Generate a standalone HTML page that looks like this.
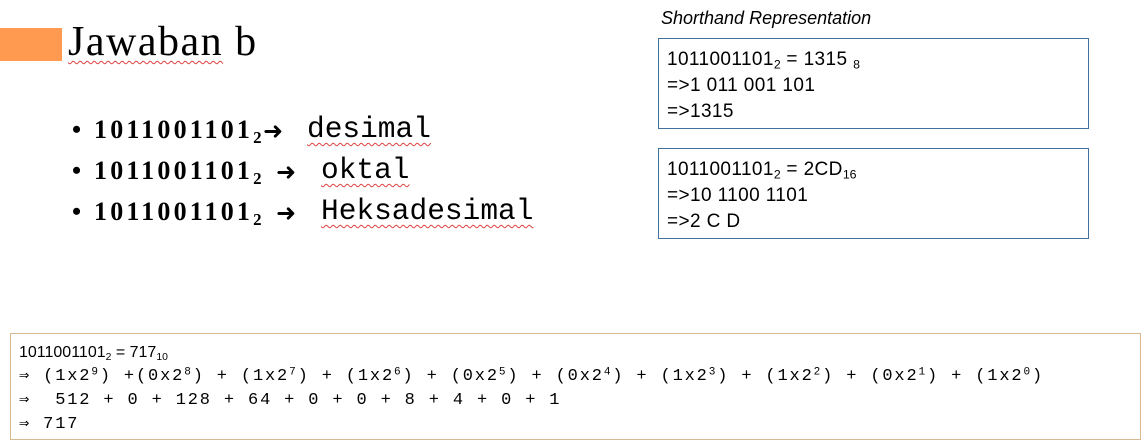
<!DOCTYPE html>
<html><head><meta charset="utf-8"><style>
body{margin:0;width:1146px;height:445px;background:#fff;position:relative;overflow:hidden;font-family:"Liberation Sans",sans-serif;color:#000}
.a{position:absolute;white-space:nowrap}
.sq{position:absolute;left:0;top:28px;width:62px;height:33px;background:#ff9a50}
.t{left:68px;top:18px;font-family:"Liberation Serif",serif;font-size:42px;letter-spacing:1.5px}
.w{text-decoration:underline wavy #e04040;text-decoration-thickness:1px;text-underline-offset:5px}
.b{font-family:"Liberation Serif",serif;font-size:26px;font-weight:bold;left:72px;letter-spacing:3.2px}
.b .m{font-family:"Liberation Mono",monospace;font-weight:normal;font-size:29.5px;letter-spacing:0;position:absolute}
.ar{font-family:"DejaVu Sans",sans-serif;font-weight:bold;font-size:24px;letter-spacing:0;position:absolute;top:2px}
sub{font-size:65%;vertical-align:-0.3em;line-height:0;letter-spacing:0}
sup{font-size:65%;vertical-align:0.5em;line-height:0}
.box{position:absolute;border:1px solid #41719c;left:658px;width:431px;height:91px;font-size:19px;line-height:26px;box-sizing:border-box;padding:8px 0 0 8px;letter-spacing:0.4px}
.bb{position:absolute;left:10px;top:333px;width:1131px;height:107px;border:1px solid #d8b890;box-sizing:border-box;padding:7px 0 0 8px;font-size:16px;line-height:23px}
.mono{font-family:"Liberation Mono",monospace;font-size:17px;letter-spacing:1.85px}
</style></head><body>
<div class="sq"></div>
<div class="a t"><span class="w">Jawaban</span> b</div>
<div class="a b" style="top:115px">• 1011001101<sub>2</sub><span class="ar" style="left:191px">➜</span><span class="m w" style="left:235px;top:-3px">desimal</span></div>
<div class="a b" style="top:156px">• 1011001101<sub>2</sub><span class="ar" style="left:204px">➜</span><span class="m w" style="left:249px;top:-3px">oktal</span></div>
<div class="a b" style="top:197px">• 1011001101<sub>2</sub><span class="ar" style="left:204px">➜</span><span class="m w" style="left:249px;top:-3px">Heksadesimal</span></div>
<div class="a" style="left:661px;top:8px;font-size:18px;font-style:italic">Shorthand Representation</div>
<div class="box" style="top:38px">1011001101<sub>2</sub> = 1315 <sub>8</sub><br>=&gt;1 011 001 101<br>=&gt;1315</div>
<div class="box" style="top:148px">1011001101<sub>2</sub> = 2CD<sub>16</sub><br>=&gt;10 1100 1101<br>=&gt;2 C D</div>
<div class="bb">1011001101<sub>2</sub> = 717<sub>10</sub><br>
<span class="mono">⇒ (1x2<sup>9</sup>) +(0x2<sup>8</sup>) + (1x2<sup>7</sup>) + (1x2<sup>6</sup>) + (0x2<sup>5</sup>) + (0x2<sup>4</sup>) + (1x2<sup>3</sup>) + (1x2<sup>2</sup>) + (0x2<sup>1</sup>) + (1x2<sup>0</sup>)</span><br>
<span class="mono">⇒ &nbsp;512 + 0 + 128 + 64 + 0 + 0 + 8 + 4 + 0 + 1</span><br>
<span class="mono">⇒ 717</span></div>
</body></html>
